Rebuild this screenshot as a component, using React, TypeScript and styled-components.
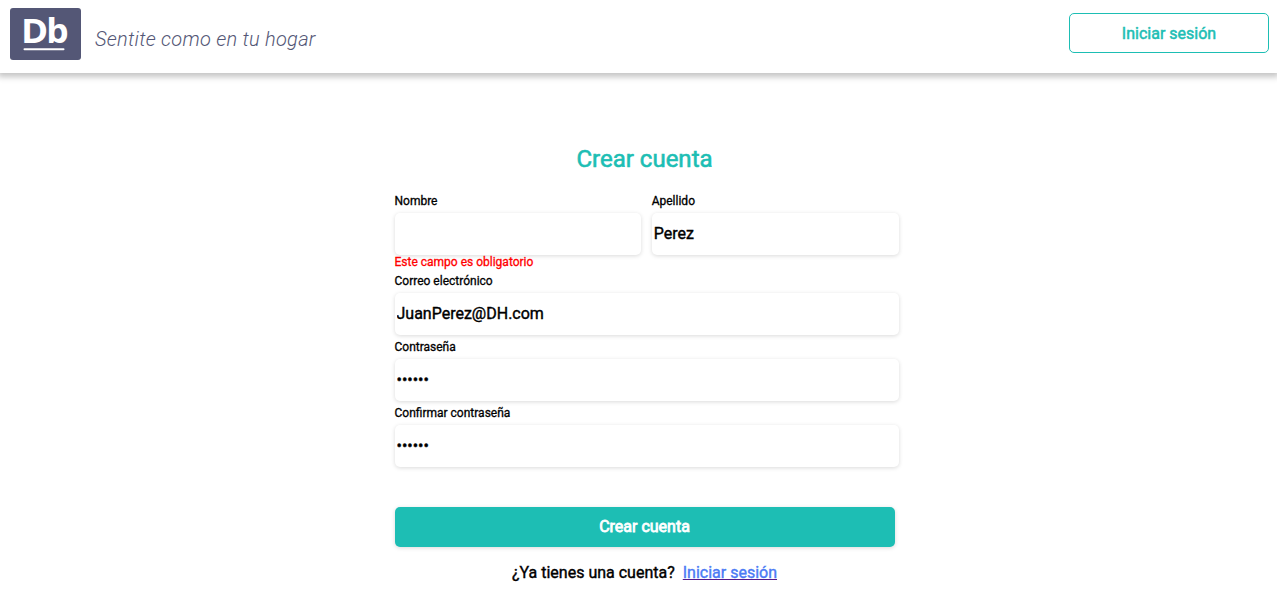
import React from "react";
import styled, { createGlobalStyle } from "styled-components";

const GlobalStyle = createGlobalStyle`
  * { box-sizing: border-box; }
  body {
    margin: 0;
    background: #fff;
    color: #000;
    font-family: Roboto, "Liberation Sans", sans-serif;
    font-weight: 400;
    -webkit-text-stroke: 0.3px currentColor;
    overflow: hidden;
  }
`;

const Page = styled.div`
  height: 598px;
  display: flex;
  flex-direction: column;
`;

const Header = styled.header`
  flex: none;
  height: 73px;
  display: flex;
  align-items: flex-start;
  justify-content: space-between;
  padding: 8px 8px 0 10px;
  box-shadow: 0 2px 6px 2px rgba(0, 0, 0, 0.23);
`;

const Brand = styled.div`
  display: flex;
  align-items: flex-start;
`;

const Logo = styled.svg`
  display: block;
  width: 71px;
  height: 52px;
`;

const Tagline = styled.span`
  margin: 18px 0 0 14px;
  font-size: 20px;
  line-height: 26px;
  font-weight: 300;
  font-style: italic;
  letter-spacing: 0.27px;
  -webkit-text-stroke: 0;
  color: #545776;
`;

const OutlineButton = styled.button`
  width: 200px;
  height: 40px;
  margin-top: 5px;
  padding: 0;
  border: 1px solid #1dbeb4;
  border-radius: 5px;
  background: #fff;
  color: #1dbeb4;
  font: 400 16px Roboto, sans-serif;
  -webkit-text-stroke: 0.5px currentColor;
`;

const Main = styled.main`
  display: flex;
  flex-direction: column;
  align-items: center;
`;

const Form = styled.form`
  width: 505px;
  margin: 71px 0 0 17px;
  display: flex;
  flex-direction: column;
`;

const Title = styled.h1`
  width: 500px;
  margin: 0;
  font-size: 24px;
  line-height: 30px;
  font-weight: 400;
  -webkit-text-stroke: 0.6px currentColor;
  text-align: center;
  color: #1dbeb4;
`;

const Fields = styled.div`
  display: grid;
  grid-template-columns: 246.5px 247px;
  column-gap: 10.7px;
  padding-top: 20px;
`;

const Field = styled.label<{ $wide?: boolean }>`
  display: flex;
  flex-direction: column;
  grid-column: ${(p) => (p.$wide ? "1 / -1" : "auto")};
  padding-bottom: ${(p) => (p.$wide ? "5px" : "0")};
`;

const Caption = styled.span`
  font-size: 12px;
  line-height: 14px;
  margin-bottom: 5px;
`;

const Input = styled.input`
  width: 100%;
  height: 42px;
  padding: 0 2px 1px;
  border: 0;
  border-radius: 5px;
  background: #fff;
  box-shadow: 0 1px 4px rgba(0, 0, 0, 0.15);
  color: #000;
  font: 400 16px Roboto, sans-serif;
  -webkit-text-stroke: 0.4px currentColor;
  outline: none;
`;

const ErrorText = styled.span`
  font-size: 12px;
  line-height: 14px;
  margin-bottom: 5px;
  color: #f00;
`;

const SubmitButton = styled.button`
  width: 500px;
  height: 40px;
  margin-top: 35px;
  padding: 0 0 1px;
  border: 0;
  border-radius: 5px;
  background: #1dbeb4;
  box-shadow: 0 1px 4px rgba(0, 0, 0, 0.15);
  color: #fff;
  font: 400 16px Roboto, sans-serif;
  -webkit-text-stroke: 0.8px currentColor;
`;

const Hint = styled.p`
  width: 500px;
  margin: 16px 0 0;
  display: flex;
  justify-content: center;
  gap: 8px;
  font-size: 16px;
  line-height: 20px;
  -webkit-text-stroke: 0.4px currentColor;
`;

const Link = styled.a`
  color: #4b7bf5;
  text-decoration: underline #551a8b;
`;

const LogoText = styled.text`
  font-family: "Open Sans", sans-serif;
  font-size: 34px;
  font-weight: 700;
  fill: #fff;
  -webkit-text-stroke: 0;
`;

export default function App() {
  return (
    <Page>
      <GlobalStyle />
      <Header>
        <Brand>
          <Logo viewBox="0 0 71 52" role="img" aria-label="Db">
            <rect width="71" height="52" rx="3" fill="#545776" />
            <LogoText x="10.9" y="35.3" textLength="27.2" lengthAdjust="spacingAndGlyphs">D</LogoText>
            <LogoText x="36.2" y="35.3" textLength="22.4" lengthAdjust="spacingAndGlyphs">b</LogoText>
            <rect x="13.5" y="40.3" width="41" height="2" rx="1" fill="#fff" />
          </Logo>
          <Tagline>Sentite como en tu hogar</Tagline>
        </Brand>
        <OutlineButton type="button">Iniciar sesión</OutlineButton>
      </Header>
      <Main>
        <Form>
          <Title>Crear cuenta</Title>
          <Fields>
            <Field>
              <Caption>Nombre</Caption>
              <Input type="text" />
              <ErrorText>Este campo es obligatorio</ErrorText>
            </Field>
            <Field>
              <Caption>Apellido</Caption>
              <Input type="text" defaultValue="Perez" />
            </Field>
            <Field $wide>
              <Caption>Correo electrónico</Caption>
              <Input type="text" defaultValue="JuanPerez@DH.com" />
            </Field>
            <Field $wide>
              <Caption>Contraseña</Caption>
              <Input type="password" defaultValue="123456" />
            </Field>
            <Field $wide>
              <Caption>Confirmar contraseña</Caption>
              <Input type="password" defaultValue="123456" />
            </Field>
          </Fields>
          <SubmitButton type="button">Crear cuenta</SubmitButton>
          <Hint>
            <span>¿Ya tienes una cuenta?</span>
            <Link href="#">Iniciar sesión</Link>
          </Hint>
        </Form>
      </Main>
    </Page>
  );
}
